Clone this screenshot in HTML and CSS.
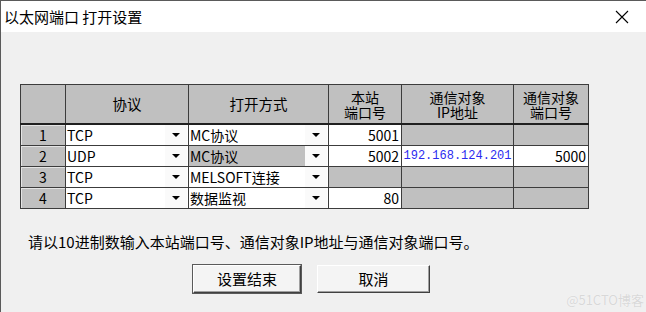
FILE: index.html
```html
<!DOCTYPE html>
<html lang="zh">
<head>
    <meta charset="UTF-8">
    <meta name="viewport" content="width=device-width, initial-scale=1.0">
    <title>以太网端口 打开设置</title>
    <link rel="stylesheet" href="styles.css">
</head>
<body>
    <div class="window">
        <div class="title-bar">
            <div class="title-text">以太网端口 打开设置</div>
            <div class="close-button">
                <svg width="14" height="14" viewBox="0 0 14 14">
                    <path d="M1 1 L13 13 M13 1 L1 13" stroke="#000" stroke-width="1.1" fill="none"/>
                </svg>
            </div>
        </div>
        <div class="window-body">
            <table class="port-table">
                <colgroup>
                    <col style="width: 45px">
                    <col style="width: 123px">
                    <col style="width: 140px">
                    <col style="width: 73px">
                    <col style="width: 112px">
                    <col style="width: 75px">
                </colgroup>
                <tr class="head-row">
                    <th></th>
                    <th>协议</th>
                    <th>打开方式</th>
                    <th class="two-line"><div>本站</div><div>端口号</div></th>
                    <th class="two-line"><div>通信对象</div><div>IP地址</div></th>
                    <th class="two-line"><div>通信对象</div><div>端口号</div></th>
                </tr>
                <tr>
                    <td class="row-num">1</td>
                    <td class="combo"><span class="combo-text">TCP</span><span class="combo-arrow"></span></td>
                    <td class="combo"><span class="combo-text">MC协议</span><span class="combo-arrow"></span></td>
                    <td class="num-cell">5001</td>
                    <td class="off"></td>
                    <td class="off"></td>
                </tr>
                <tr>
                    <td class="row-num">2</td>
                    <td class="combo"><span class="combo-text">UDP</span><span class="combo-arrow"></span></td>
                    <td class="combo"><span class="combo-text selected">MC协议</span><span class="combo-arrow"></span></td>
                    <td class="num-cell">5002</td>
                    <td class="ip-cell">192.168.124.201</td>
                    <td class="num-cell">5000</td>
                </tr>
                <tr>
                    <td class="row-num">3</td>
                    <td class="combo"><span class="combo-text">TCP</span><span class="combo-arrow"></span></td>
                    <td class="combo"><span class="combo-text">MELSOFT连接</span><span class="combo-arrow"></span></td>
                    <td class="off"></td>
                    <td class="off"></td>
                    <td class="off"></td>
                </tr>
                <tr>
                    <td class="row-num">4</td>
                    <td class="combo"><span class="combo-text">TCP</span><span class="combo-arrow"></span></td>
                    <td class="combo"><span class="combo-text">数据监视</span><span class="combo-arrow"></span></td>
                    <td class="num-cell">80</td>
                    <td class="off"></td>
                    <td class="off"></td>
                </tr>
            </table>

            <p class="hint">请以10进制数输入本站端口号、通信对象IP地址与通信对象端口号。</p>

            <div class="button-row">
                <button class="dlg-button default">设置结束</button>
                <button class="dlg-button cancel">取消</button>
            </div>
        </div>
        <div class="watermark">@51CTO博客</div>
    </div>
</body>
</html>
```

FILE: styles.css
```css
body{
    margin: 0;
    font-family: "Noto Sans CJK SC", "Liberation Sans", sans-serif;
    background-color: #f0f0f0;
}
.window{
    position: relative;
    width: 646px;
    height: 312px;
    box-sizing: border-box;
    border-top: 1px solid #5a5a5a;
    border-left: 1px solid #5a5a5a;
    background-color: #f0f0f0;
    overflow: hidden;
}

/***************** -title bar- *******************/

.title-bar{
    height: 31px;
    background-color: #fff;
    display: flex;
    align-items: center;
    justify-content: space-between;
}
.title-text{
    padding-left: 3px;
    font-size: 15px;
    line-height: 18px;
    color: #000;
}
.close-button{
    width: 46px;
    height: 31px;
    display: flex;
    align-items: center;
    justify-content: center;
    margin-right: 1px;
}

/***************** -table- *******************/

.window-body{
    padding: 52px 0 0 19px;
}
.port-table{
    table-layout: fixed;
    border-collapse: collapse;
    width: 568px;
    border: 1px solid #7a7a7a;
    font-size: 14px;
}
.port-table th,
.port-table td{
    border: 1px solid #3c3c3c;
    padding: 0;
    height: 20px;
    line-height: 18px;
    color: #000;
    white-space: nowrap;
    overflow: hidden;
}
.port-table th{
    height: 37px;
    background-color: #c0c0c0;
    font-weight: normal;
    text-align: center;
    font-size: 14.5px;
    border-bottom: 2px solid #202020;
}
/* the dialog packs the two header lines tightly */
.port-table th.two-line{
    font-size: 14px;
    line-height: 15px;
    padding-top: 1px;
}
.row-num{
    background-color: #c0c0c0;
    text-align: center;
    box-shadow: inset 1px 1px 0 #e4e4e4;
}
.combo{
    background-color: #fff;
}
.combo-text{
    display: inline-block;
    vertical-align: top;
    width: calc(100% - 23px);
    padding-left: 1px;
    box-sizing: border-box;
    height: 20px;
    line-height: 20px;
}
.combo-text.selected{
    background-color: #c0c0c0;
}
.combo-arrow{
    display: inline-block;
    vertical-align: top;
    width: 22px;
    height: 20px;
    background-color: #fafafa;
    position: relative;
}
.combo-arrow::after{
    content: "";
    position: absolute;
    left: 7px;
    top: 8px;
    border-left: 4px solid transparent;
    border-right: 4px solid transparent;
    border-top: 4px solid #000;
}
.num-cell{
    background-color: #fff;
    text-align: right;
    padding-right: 2px !important;
}
.ip-cell{
    background-color: #fff;
    color: #2b2bf0 !important;
    font-family: "Liberation Mono", monospace;
    font-size: 12px;
    text-align: center;
}
.off{
    background-color: #c0c0c0;
}

/***************** -footer- *******************/

.hint{
    margin: 24px 0 0 8px;
    font-size: 15px;
    line-height: 18px;
    color: #000;
}
.button-row{
    display: flex;
    gap: 16px;
    margin: 14px 0 0 173px;
}
.dlg-button{
    width: 110px;
    height: 28px;
    font-family: "Noto Sans CJK SC", sans-serif;
    font-size: 15px;
    line-height: 20px;
    color: #000;
    background-color: #f4f4f4;
    border: 1px solid;
    border-color: #fff #404040 #404040 #fff;
    box-shadow: inset -1px -1px 0 #a0a0a0;
    padding: 0;
}
.dlg-button.default{
    outline: 1px solid #5a5a5a;
    width: 108px;
}
.dlg-button.cancel{
    width: 113px;
}
.watermark{
    position: absolute;
    right: 2px;
    bottom: 3px;
    font-size: 13px;
    color: #d8d8d8;
    text-shadow: 0 0 1px #fff;
}
```
